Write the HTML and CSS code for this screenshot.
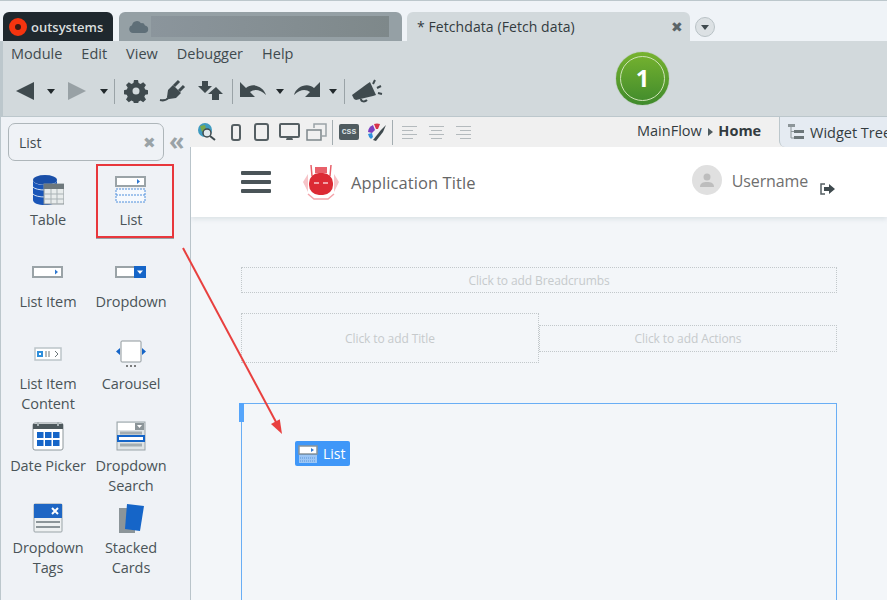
FILE: index.html
```html
<!DOCTYPE html>
<html>
<head>
    <title>Fetchdata</title>
    <link rel="stylesheet" href="styles.css">
</head>
<body>
    <div class="app">
        <div class="tabstrip">
            <div class="tab tab-brand">
                <span class="brand-ring"></span>
                <span class="brand-name">outsystems</span>
            </div>
            <div class="tab tab-cloud">
                <svg class="cloud" width="20" height="12" viewBox="0 0 20 12"><path d="M4 12a4 4 0 0 1-1-7.800 5 5 0 0 1 9-2 3.500 3.500 0 0 1 4 2.300A3.800 3.800 0 0 1 16 12z" fill="#5f6f78"/></svg>
                <span class="blurred"></span>
            </div>
            <div class="tab tab-active">
                <span class="tab-title">* Fetchdata (Fetch data)</span>
                <span class="tab-close">✖</span>
            </div>
            <span class="tab-more"></span>
        </div>

        <div class="ribbon">
            <ul class="menu">
                <li>Module</li>
                <li>Edit</li>
                <li>View</li>
                <li>Debugger</li>
                <li>Help</li>
            </ul>
            <div class="tools">
                <svg class="tool" width="20" height="20" viewBox="0 0 20 20"><path d="M19 1v18L1 10z" fill="#3f4a4e"/></svg>
                <span class="caret caret-back"></span>
                <svg class="tool" width="20" height="20" viewBox="0 0 20 20"><path d="M2 1v18l18-9z" fill="#98a1a5"/></svg>
                <span class="caret caret-fwd"></span>
                <span class="sep"></span>
                <svg class="tool" width="24" height="24" viewBox="0 0 24 24"><path d="M10 1h4l.6 3 2 .9 2.600-1.700 2.800 2.800-1.700 2.600.9 2 3 .6v4l-3 .6-.9 2 1.700 2.600-2.800 2.800-2.600-1.700-2 .9-.6 3h-4l-.6-3-2-.9-2.600 1.700-2.800-2.800 1.700-2.600-.9-2-3-.6v-4l3-.6.9-2L2 6l2.800-2.800 2.600 1.700 2-.9z M12 8.500a3.500 3.500 0 1 0 0 7 3.500 3.500 0 0 0 0-7z" fill="#3f4a4e" fill-rule="evenodd"/></svg>
                <svg class="tool tool-plug" width="28" height="24" viewBox="0 0 28 24"><path d="M1 21c4 1 7 0 9-3" fill="none" stroke="#3f4a4e" stroke-width="2"/><path d="M8 18l1-7 5-5 8 8-5 5-7 1z" fill="#3f4a4e"/><path d="M15 7l5-5M20 12l5-5" stroke="#3f4a4e" stroke-width="3"/></svg>
                <svg class="tool tool-pub" width="26" height="22" viewBox="0 0 26 22"><path d="M5 1h6v5h4l-7 7-7-7h4z" fill="#3f4a4e"/><path d="M19 7l7 7h-4v6h-7v-6h-4z" fill="#3f4a4e"/></svg>
                <span class="sep sep-tight"></span>
                <svg class="tool" width="28" height="20" viewBox="0 0 28 20"><path d="M1 1v15h15l-5-5c4-3 10-3 16 3-2-8-13-13-20-7z" fill="#3f4a4e"/></svg>
                <span class="caret caret-undo"></span>
                <svg class="tool tool-redo" width="28" height="20" viewBox="0 0 28 20"><path d="M27 1v15H12l5-5c-4-3-10-3-16 3 2-8 13-13 20-7z" fill="#3f4a4e"/></svg>
                <span class="caret caret-redo"></span>
                <span class="sep sep-tight"></span>
                <svg class="tool" width="32" height="26" viewBox="0 0 32 26"><path d="M1 17l15-11 3-2 6 13-3 1-17 4-2-1z" fill="#3f4a4e"/><path d="M10 21c0 3 4 3 6 1" fill="none" stroke="#3f4a4e" stroke-width="2"/><path d="M22 6l2-4M26 10l4-2M27 15l4 1" stroke="#3f4a4e" stroke-width="2"/></svg>
            </div>
            <div class="badge"><span class="badge-ring">1</span></div>
        </div>

        <div class="workspace">
            <aside class="sidebar">
                <div class="search-row">
                    <div class="search">
                        <span>List</span>
                        <span class="search-clear">✖</span>
                    </div>
                    <span class="collapse">«</span>
                </div>
                <div class="palette">
                    <div class="widget">
                        <svg width="32" height="32" viewBox="0 0 32 32"><ellipse cx="13" cy="6" rx="12" ry="5" fill="#1a4fa8"/><path d="M1 6v20c0 3 5 5 12 5s12-2 12-5V6c0 3-5 5-12 5S1 9 1 6z" fill="#1a56b8"/><path d="M1 13c3 4 21 4 24 0M1 20c3 4 21 4 24 0" stroke="#d6e2f2" fill="none"/><rect x="12" y="10" width="20" height="20" fill="#e8ecec" stroke="#8a9396"/><rect x="12" y="10" width="20" height="5" fill="#6e787c"/><path d="M12 20h20M12 25h20M19 15v15M25 15v15" stroke="#a9b2b5"/></svg>
                        <span class="widget-name">Table</span>
                    </div>
                    <div class="widget widget-picked">
                        <svg width="32" height="28" viewBox="0 0 32 28"><rect x="1" y="1" width="29" height="9" fill="#fff" stroke="#9aa3a7" stroke-width="2"/><path d="M22 3l3 2.500-3 2.500z" fill="#2f78d0"/><rect x="1" y="13" width="29" height="13" fill="#f6f9fd" stroke="#4f8fdc" stroke-dasharray="2 1"/><path d="M1 19h29" stroke="#4f8fdc" stroke-dasharray="2 1"/></svg>
                        <span class="widget-name">List</span>
                    </div>
                    <div class="widget">
                        <svg width="32" height="14" viewBox="0 0 32 14"><rect x="1" y="2" width="29" height="10" fill="#fff" stroke="#9aa3a7" stroke-width="2"/><path d="M23 4.500l3 2.500-3 2.500z" fill="#2f78d0"/></svg>
                        <span class="widget-name">List Item</span>
                    </div>
                    <div class="widget">
                        <svg width="32" height="14" viewBox="0 0 32 14"><rect x="1" y="2" width="29" height="10" fill="#fff" stroke="#9aa3a7" stroke-width="2"/><rect x="19" y="1" width="12" height="12" fill="#1565c8"/><path d="M22 5.500h6L25 9z" fill="#fff"/></svg>
                        <span class="widget-name">Dropdown</span>
                    </div>
                    <div class="widget widget-two">
                        <svg width="32" height="18" viewBox="0 0 32 18"><rect x="3" y="3" width="26" height="12" fill="#fff" stroke="#bcc5c9" stroke-width="1.500"/><rect x="6" y="7" width="4" height="4" fill="#fff" stroke="#2f8fdc" stroke-width="2"/><path d="M13 7h6M13 9h6M13 11h6" stroke="#6c7679" stroke-dasharray="2 1"/><path d="M23 6l3 3-3 3" fill="none" stroke="#6c7679"/></svg>
                        <span class="widget-name">List Item<br>Content</span>
                    </div>
                    <div class="widget widget-two">
                        <svg width="32" height="28" viewBox="0 0 32 28"><rect x="6" y="1" width="20" height="21" rx="1" fill="#fff" stroke="#8e979b"/><path d="M5 8v7l-4-3.500zM27 8v7l4-3.500z" fill="#1565c8"/><path d="M11 26h2M15 26h2M19 26h2" stroke="#555" stroke-width="1.500"/></svg>
                        <span class="widget-name">Carousel</span>
                    </div>
                    <div class="widget widget-two">
                        <svg width="32" height="30" viewBox="0 0 32 30"><rect x="1" y="2" width="30" height="27" rx="2" fill="#fff" stroke="#8e979b"/><path d="M1 3h30v5H1z" fill="#4d585c"/><path d="M6 1v4M26 1v4" stroke="#a9b2b5" stroke-width="2"/><path d="M5 11h6.500v6H5zM13 11h6.500v6H13zM21 11h6.500v6H21zM5 19h6.500v6H5zM13 19h6.500v6H13zM21 19h6.500v6H21z" fill="#1565c8"/></svg>
                        <span class="widget-name">Date Picker</span>
                    </div>
                    <div class="widget widget-two">
                        <svg width="30" height="30" viewBox="0 0 30 30"><rect x="1" y="1" width="28" height="28" fill="#dfe4e6" stroke="#9aa3a7"/><rect x="2" y="2" width="17" height="7" fill="#fff"/><rect x="19" y="2" width="9" height="7" fill="#8c9599"/><path d="M21 4h5l-2.500 3z" fill="#fff"/><path d="M4 12h22M4 24h22" stroke="#a4adb1" stroke-width="3"/><rect x="2" y="15" width="26" height="5" fill="#fff" stroke="#1565c8" stroke-width="2"/></svg>
                        <span class="widget-name">Dropdown<br>Search</span>
                    </div>
                    <div class="widget widget-two">
                        <svg width="30" height="30" viewBox="0 0 30 30"><rect x="1" y="1" width="28" height="28" rx="1" fill="#eef1f2" stroke="#9aa3a7"/><rect x="1" y="1" width="28" height="14" fill="#1e66c4"/><path d="M19 5l6 6M25 5l-6 6" stroke="#fff" stroke-width="2"/><path d="M3 19h24M3 24h24" stroke="#8c9599" stroke-width="2"/></svg>
                        <span class="widget-name">Dropdown<br>Tags</span>
                    </div>
                    <div class="widget widget-two">
                        <svg width="28" height="30" viewBox="0 0 28 30"><rect x="2" y="5" width="16" height="25" fill="#8c9599"/><path d="M10 1l17 2-4 25-15-2z" fill="#1565c8"/></svg>
                        <span class="widget-name">Stacked<br>Cards</span>
                    </div>
                </div>
            </aside>

            <main class="editor">
                <div class="canvas-bar">
                    <svg class="bar-icon" width="20" height="18" viewBox="0 0 20 18"><circle cx="8" cy="7" r="7" fill="#3f9bc0"/><path d="M3 3l5-1 1 4-4 3zM10 9l4 1-2 4z" fill="#7aa84a"/><circle cx="10" cy="10" r="4" fill="#dfe8ec" stroke="#3f4a4e" stroke-width="1.500"/><path d="M13 13l5 4" stroke="#3f4a4e" stroke-width="2"/></svg>
                    <svg class="bar-icon bar-phone" width="11" height="17" viewBox="0 0 11 17"><rect x="2" y="1" width="8" height="15" rx="2" fill="none" stroke="#555f63" stroke-width="2"/></svg>
                    <svg class="bar-icon bar-tablet" width="15" height="18" viewBox="0 0 15 18"><rect x="1" y="1" width="13" height="16" rx="2" fill="none" stroke="#555f63" stroke-width="2"/></svg>
                    <svg class="bar-icon bar-desk" width="21" height="18" viewBox="0 0 21 18"><rect x="1" y="1" width="19" height="13" rx="1" fill="none" stroke="#555f63" stroke-width="2"/><path d="M7 17h7l-1-3H8z" fill="#555f63"/></svg>
                    <svg class="bar-icon bar-rotate" width="21" height="18" viewBox="0 0 21 18"><path d="M8 5V1h12v12h-4" fill="none" stroke="#9aa3a7" stroke-width="1.500"/><rect x="1" y="7" width="14" height="10" fill="none" stroke="#7d878b" stroke-width="1.500"/></svg>
                    <span class="bar-sep"></span>
                    <span class="css-btn">CSS</span>
                    <svg class="bar-icon bar-paint" width="20" height="18" viewBox="0 0 20 18"><path d="M1 9a8 8 0 0 1 5-7l2 5-3 3z" fill="#7d3fc0"/><path d="M7 1a8 8 0 0 1 6 0l-2 5H9z" fill="#d8344a"/><path d="M1 11l4-1 1 4-2 2a8 8 0 0 1-3-5z" fill="#2f8fdc"/><path d="M6 17l8-10 5-5-3 7-7 9z" fill="#3f4a4e"/></svg>
                    <span class="bar-sep"></span>
                    <span class="align align-left"><i></i><i></i><i></i><i></i></span>
                    <span class="align align-center"><i></i><i></i><i></i><i></i></span>
                    <span class="align align-right"><i></i><i></i><i></i><i></i></span>
                    <span class="crumbs">MainFlow <span class="crumb-arrow"></span> <b>Home</b></span>
                    <div class="tree-tab">
                        <svg width="16" height="16" viewBox="0 0 16 16"><path d="M0 0h7v3H0z" fill="#8c9599"/><path d="M3 3v11h3M3 7.500h3" fill="none" stroke="#8c9599"/><path d="M6 6h10v3H6zM6 12h10v3H6z" fill="#6c7679"/></svg>
                        <span>Widget Tree</span>
                    </div>
                </div>

                <div class="canvas">
                    <header class="app-header">
                        <div class="burger"><i></i><i></i><i></i></div>
                        <svg class="robot" width="38" height="36" viewBox="0 0 38 36"><path d="M1 18l5-8v18zM37 18l-5-8v18z" fill="#f6c4c8"/><path d="M9 1l1 11M29 1l-1 11" stroke="#e8606a" stroke-width="1.500" fill="none"/><path d="M13 9V3h12v6z" fill="#e8606a"/><rect x="7" y="9" width="24" height="22" rx="10" fill="#dc2a34"/><path d="M12 19h5M21 19h5" stroke="#f8c8cc" stroke-width="1.500"/><path d="M6 30l6 5h14l6-5" stroke="#f4a4aa" stroke-width="1.500" fill="none"/></svg>
                        <span class="app-title">Application Title</span>
                        <div class="user">
                            <span class="avatar"><svg width="16" height="16" viewBox="0 0 16 16"><circle cx="8" cy="5" r="3.500" fill="#bdbdbd"/><path d="M1 15c0-4 3-5 7-5s7 1 7 5z" fill="#bdbdbd"/></svg></span>
                            <span class="username">Username</span>
                            <svg class="logout" width="16" height="14" viewBox="0 0 16 14"><path d="M6 2H2v10h4" fill="none" stroke="#555f63" stroke-width="1.500"/><path d="M5 5h5V2l6 5-6 5V9H5z" fill="#3f4a4e"/></svg>
                        </div>
                    </header>
                    <div class="page">
                        <div class="slot slot-crumbs">Click to add Breadcrumbs</div>
                        <div class="title-row">
                            <div class="slot slot-title">Click to add Title</div>
                            <div class="slot slot-actions">Click to add Actions</div>
                        </div>
                        <div class="main-box"><span class="main-handle"></span></div>
                    </div>
                </div>
            </main>
        </div>

        <div class="ghost">
            <svg width="20" height="20" viewBox="0 0 20 20"><rect x="1" y="2" width="18" height="8" fill="#fff" stroke="#8c9599" stroke-width="1.500"/><path d="M13 4l3 2-3 2z" fill="#2f78d0"/><rect x="1" y="11" width="18" height="8" fill="#9cc6f5"/><path d="M2 14h16M2 17h16" stroke="#5a95d8" stroke-dasharray="1 1"/></svg>
            <span>List</span>
        </div>
        <svg class="arrow" width="110" height="200" viewBox="0 0 110 200">
            <path d="M2 2L95 176" stroke="#e8403f" stroke-width="2" fill="none"/>
            <path d="M101 188L90 178l8.800-4.800z" fill="#e8403f"/>
        </svg>
    </div>
</body>
</html>
```

FILE: styles.css
```css
* {
    box-sizing: border-box;
}
html, body {
    margin: 0;
    height: 100%;
    overflow: hidden;
}
body {
    font-family: "Open Sans", "Noto Sans", sans-serif;
    font-size: 14px;
    color: #3f4a4e;
    background-color: #eef2f6;
}
.app {
    position: relative;
    width: 887px;
    height: 600px;
    overflow: hidden;
}

/* tabs */
.tabstrip {
    display: flex;
    height: 41px;
    padding: 11px 0 0 3px;
    align-items: flex-end;
    border-top: 1px solid #bcc7cc;
    background-color: #eff3f7;
}
.tab {
    height: 29px;
    display: flex;
    align-items: center;
    border-radius: 6px 6px 0 0;
}
.tab-brand {
    width: 110px;
    background-color: #1f282e;
    padding-left: 6px;
}
.brand-ring {
    width: 18px;
    height: 18px;
    border: 6px solid #f5340f;
    border-radius: 50%;
    background-color: #3b1a14;
}
.brand-name {
    margin-left: 4px;
    color: #d9dedf;
    font-size: 13px;
    font-weight: 600;
}
.tab-cloud {
    width: 283px;
    margin-left: 6px;
    background-color: #95a0a5;
    padding-left: 10px;
}
.blurred {
    width: 238px;
    height: 21px;
    margin-left: 2px;
    background: linear-gradient(90deg, #8b959c, #7e888a);
}
.tab-active {
    width: 283px;
    margin-left: 5px;
    background-color: #d2d9dc;
    padding: 0 7px 0 10px;
    justify-content: space-between;
}
.tab-title {
    font-size: 14px;
    letter-spacing: 0.08px;
    color: #333b3f;
}
.tab-close {
    font-size: 14px;
    color: #5a6468;
}
.tab-more {
    width: 20px;
    height: 20px;
    margin: 0 0 4px 5px;
    border: 1px solid #b9c2c6;
    border-radius: 50%;
    background-color: #dce1e4;
    position: relative;
}
.tab-more::after {
    content: "";
    position: absolute;
    left: 5px;
    top: 7px;
    border: 4px solid transparent;
    border-top: 5px solid #3f4a4e;
    border-bottom: 0;
}

/* ribbon */
.ribbon {
    position: relative;
    height: 76px;
    background-color: #d2d9dc;
    border-left: 3px solid #bcc7cc;
    border-bottom: 1px solid #bcc7cc;
}
.menu {
    display: flex;
    gap: 19px;
    list-style-type: none;
    margin: 0;
    padding: 3px 0 0 8px;
    font-size: 14.5px;
    height: 26px;
}
.tools {
    display: flex;
    align-items: center;
    height: 30px;
    margin-top: 9px;
    padding-left: 12px;
}
.tool {
    flex: none;
}
.tool-plug {
    margin-left: 11px;
}
.tool-pub {
    margin-left: 10px;
    margin-right: 9px;
}
.tool-redo {
    margin-left: 4px;
}
.caret {
    flex: none;
    border: 4px solid transparent;
    border-top: 5px solid #22292c;
    border-bottom: 0;
}
.caret-back {
    margin: 0 11px 0 12px;
}
.caret-fwd {
    margin: 0 6px 0 14px;
}
.caret-undo {
    margin: 0 5px 0 9px;
}
.caret-redo {
    margin: 0 7px 0 8px;
}
.sep {
    flex: none;
    width: 1px;
    height: 25px;
    background-color: #9aa3a7;
    margin-right: 9px;
}
.sep-tight {
    margin-right: 6px;
}
.badge {
    position: absolute;
    left: 613px;
    top: 11px;
    width: 53px;
    height: 53px;
    padding: 4px;
    border-radius: 50%;
    background: linear-gradient(#77b32f, #3f8a2c);
    box-shadow: 0 0 1px #6a9a4a;
}
.badge-ring {
    display: block;
    width: 45px;
    height: 45px;
    border: 1px solid #cfe3b8;
    border-radius: 50%;
    color: #fff;
    font-family: "Noto Sans", sans-serif;
    font-size: 24px;
    font-weight: 700;
    line-height: 42px;
    text-align: center;
}

/* left palette */
.workspace {
    display: flex;
    height: 483px;
}
.sidebar {
    flex: none;
    width: 190px;
    border-left: 1px solid #bcc7cc;
    background-color: #eff2f6;
}
.search-row {
    display: flex;
    align-items: center;
    padding: 6px 0 0 7px;
}
.search {
    width: 156px;
    height: 38px;
    display: flex;
    align-items: center;
    justify-content: space-between;
    padding: 0 7px 0 10px;
    border: 1px solid #aeb6ba;
    border-radius: 7px;
}
.search-clear {
    font-size: 15px;
    color: #9aa3a7;
}
.collapse {
    margin-left: 5px;
    font-size: 25px;
    font-weight: 700;
    line-height: 22px;
    margin-top: -4px;
    color: #9aa3a7;
}
.palette {
    display: grid;
    grid-template-columns: 82px 84px;
    grid-auto-rows: 82px;
    margin: 3px 0 0 6px;
}
.widget {
    display: flex;
    flex-direction: column;
    align-items: center;
    height: 82px;
    padding-top: 10px;
    line-height: 20px;
    font-size: 14.5px;
    letter-spacing: -0.1px;
    color: #4a5458;
    text-align: center;
}
.widget svg {
    flex: none;
    height: 32px;
}
.widget-name {
    margin-top: 4px;
}
.widget-picked {
    position: relative;
}
.widget-picked::after {
    content: "";
    position: absolute;
    left: 7px;
    top: 0;
    width: 74px;
    height: 70px;
    border: 2px solid #e8373c;
    box-shadow: 0 1px 0 #9aa3a7;
}

/* editor */
.editor {
    flex: 1;
    min-width: 0;
    display: flex;
    flex-direction: column;
}
.canvas-bar {
    flex: none;
    position: relative;
    display: flex;
    align-items: center;
    height: 30px;
    padding-left: 7px;
    background-color: #f0f0f0;
    white-space: nowrap;
}
.bar-phone {
    margin-left: 13px;
}
.bar-tablet {
    margin-left: 13px;
}
.bar-desk {
    margin-left: 10px;
}
.bar-rotate {
    margin-left: 6px;
}
.bar-sep {
    width: 1px;
    height: 25px;
    background-color: #a4adb1;
    margin: 0 6px 0 5px;
}
.css-btn {
    width: 20px;
    height: 16px;
    border-radius: 2px;
    background-color: #4f5b5f;
    color: #dfe5e7;
    font-family: "Liberation Mono", monospace;
    font-size: 8px;
    font-weight: 700;
    line-height: 16px;
    text-align: center;
}
.bar-paint {
    margin-left: 8px;
}
.align {
    display: flex;
    flex-direction: column;
    gap: 3px;
    width: 15px;
    margin-right: 12px;
}
.align i {
    display: block;
    height: 1px;
    background-color: #b4babd;
}
.align-left {
    margin-left: 3px;
    align-items: flex-start;
}
.align-center {
    align-items: center;
}
.align-right {
    align-items: flex-end;
}
.align i:nth-child(odd) {
    width: 15px;
}
.align i:nth-child(even) {
    width: 11px;
}
.crumbs {
    position: absolute;
    left: 447px;
    top: 4px;
    font-size: 14.5px;
    color: #333b3f;
}
.crumb-arrow {
    display: inline-block;
    border: 4px solid transparent;
    border-left: 5px solid #4f5b5f;
    border-right: 0;
    margin: 0 2px;
}
.tree-tab {
    position: absolute;
    left: 589px;
    top: 0;
    width: 120px;
    height: 30px;
    display: flex;
    align-items: center;
    gap: 6px;
    padding-left: 8px;
    background-color: #e5ebf2;
    border-left: 1px solid #bcc7cc;
    border-radius: 0 0 0 6px;
    color: #333b3f;
    font-size: 14.5px;
}
.canvas {
    flex: 1;
    display: flex;
    flex-direction: column;
    border-left: 1px solid #b9c4ca;
    background-color: #f3f6f9;
    overflow: hidden;
}
.app-header {
    flex: none;
    display: flex;
    align-items: center;
    height: 70px;
    padding-left: 50px;
    background-color: #fff;
    box-shadow: 0 2px 5px rgba(120, 140, 150, 0.2);
}
.burger {
    display: flex;
    flex-direction: column;
    gap: 5px;
    width: 30px;
}
.burger i {
    display: block;
    height: 4px;
    border-radius: 1px;
    background-color: #4a5458;
}
.robot {
    margin-left: 31px;
}
.app-title {
    margin-left: 11px;
    font-size: 16.5px;
    letter-spacing: 0.1px;
    color: #666;
}
.user {
    display: flex;
    align-items: flex-start;
    margin: 0 0 4px 216px;
    color: #6f6f6f;
}
.avatar {
    width: 30px;
    height: 30px;
    border-radius: 50%;
    background-color: #e0e0e0;
    display: flex;
    align-items: center;
    justify-content: center;
}
.username {
    margin-left: 10px;
    padding-top: 1px;
    font-size: 16px;
    line-height: 30px;
    letter-spacing: -0.1px;
}
.logout {
    margin: 17px 0 0 11px;
}
.page {
    padding: 50px 50px 0;
    width: 696px;
}
.slot {
    flex: none;
    display: flex;
    align-items: center;
    justify-content: center;
    border: 1px dotted #c2c8cb;
    color: #c6cacc;
    font-size: 12px;
    letter-spacing: -0.1px;
}
.slot-crumbs {
    height: 26px;
    width: 596px;
}
.title-row {
    display: flex;
    align-items: center;
    margin-top: 20px;
}
.slot-title {
    width: 298px;
    height: 50px;
}
.slot-actions {
    width: 298px;
    height: 27px;
}
.main-box {
    position: relative;
    width: 596px;
    height: 300px;
    margin-top: 40px;
    border: 1px solid #69aef5;
}
.main-handle {
    position: absolute;
    left: -3px;
    top: -1px;
    width: 5px;
    height: 19px;
    background-color: #55a5fb;
}

/* drag overlay */
.ghost {
    position: absolute;
    left: 295px;
    top: 441px;
    width: 55px;
    height: 25px;
    display: flex;
    align-items: center;
    gap: 5px;
    padding-left: 3px;
    border-radius: 2px;
    background-color: #3f97f8;
    color: #fff;
    font-size: 14px;
}
.arrow {
    position: absolute;
    left: 181px;
    top: 246px;
}
```
